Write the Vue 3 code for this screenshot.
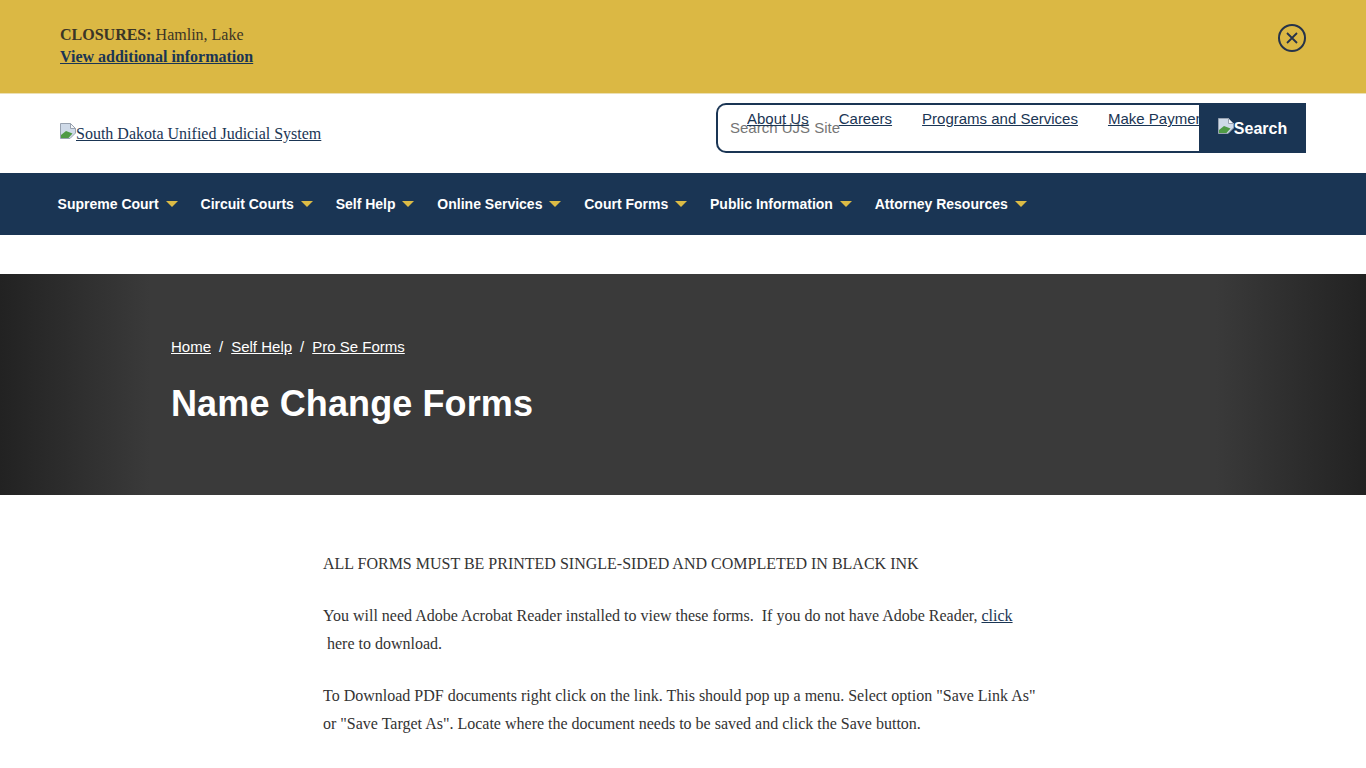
<template>
  <main class="page">
    <section class="alert">
      <div class="alert-text">
        <p><strong>CLOSURES:</strong> Hamlin, Lake</p>
        <a href="#" class="alert-link">View additional information</a>
      </div>
      <button class="alert-close" aria-label="Close">
        <svg width="30" height="30" viewBox="0 0 30 30">
          <circle cx="15" cy="15" r="13" fill="none" stroke="#26334a" stroke-width="2" />
          <path d="M10 10l10 10M20 10l-10 10" fill="none" stroke="#26334a" stroke-width="1.8" />
        </svg>
      </button>
    </section>

    <header class="header">
      <a href="#" class="logo">
        <svg class="broken" width="16" height="16" viewBox="0 0 16 16">
          <path d="M0.5 0.5H10.5L15.5 5.5V10L10 15.5H0.5Z" fill="#cfdae8" stroke="#98a2b0" />
          <path d="M10.5 0.5V5.5H15.5Z" fill="#f4f6f8" stroke="#98a2b0" />
          <path d="M1 15V12L6 8L12.5 10.5L8.5 15Z" fill="#4f9a45" />
        </svg>South Dakota Unified Judicial System
      </a>

      <div class="search-wrap">
        <form class="search" @submit.prevent>
          <input type="text" placeholder="Search UJS Site" />
          <button type="submit">
            <svg class="broken" width="16" height="16" viewBox="0 0 16 16">
              <path d="M0.5 0.5H10.5L15.5 5.5V10L10 15.5H0.5Z" fill="#cfdae8" stroke="#98a2b0" />
              <path d="M10.5 0.5V5.5H15.5Z" fill="#f4f6f8" stroke="#98a2b0" />
              <path d="M1 15V12L6 8L12.5 10.5L8.5 15Z" fill="#4f9a45" />
            </svg>Search
          </button>
        </form>
        <nav class="top-links">
          <a v-for="link in topLinks" :key="link" href="#">{{ link }}</a>
        </nav>
      </div>
    </header>

    <nav class="main-nav">
      <a v-for="item in navItems" :key="item" href="#" class="nav-item">
        {{ item }}<span class="caret"></span>
      </a>
    </nav>

    <section class="hero">
      <div class="crumbs">
        <a href="#">Home</a><span>/</span><a href="#">Self Help</a><span>/</span><a href="#">Pro Se Forms</a>
      </div>
      <h1>Name Change Forms</h1>
    </section>

    <section class="content">
      <p>ALL FORMS MUST BE PRINTED SINGLE-SIDED AND COMPLETED IN BLACK INK</p>
      <p>
        You will need Adobe Acrobat Reader installed to view these forms.&nbsp; If you do not have Adobe Reader,
        <a href="#">click</a><br />&nbsp;here to download.
      </p>
      <p>
        To Download PDF documents right click on the link. This should pop up a menu. Select option "Save Link As"
        or "Save Target As". Locate where the document needs to be saved and click the Save button.
      </p>
    </section>
  </main>
</template>

<script setup>
const topLinks = ["About Us", "Careers", "Programs and Services", "Make Payments"];

const navItems = [
  "Supreme Court",
  "Circuit Courts",
  "Self Help",
  "Online Services",
  "Court Forms",
  "Public Information",
  "Attorney Resources",
];
</script>

<style>
html,
body {
  margin: 0;
  background: #fff;
  overflow: hidden;
}
</style>

<style scoped>
* {
  box-sizing: border-box;
}

.page {
  height: 768px;
  overflow: hidden;
  font-family: "Liberation Serif", serif;
  font-size: 16px;
  color: #333;
}

.alert {
  height: 94px;
  padding: 24px 60px 0;
  background: #dbb844;
  border-bottom: 1px solid #ece0b4;
  display: flex;
  justify-content: space-between;
  align-items: flex-start;
  color: #3b3526;
  line-height: 22px;
}

.alert p {
  margin: 0;
}

.alert-link {
  font-weight: 700;
  color: #1a3554;
}

.alert-close {
  border: none;
  background: none;
  padding: 0;
  width: 30px;
  height: 30px;
  margin: -1px -1px 0 0;
}

.header {
  height: 79px;
  padding: 9px 60px 0;
  display: flex;
  justify-content: space-between;
  align-items: flex-start;
}

.logo {
  margin-top: 20px;
  line-height: 20px;
  color: #1a3554;
}

.broken {
  vertical-align: baseline;
}

.search-wrap {
  position: relative;
  width: 590px;
  height: 50px;
}

.search {
  display: flex;
  height: 50px;
}

.search input {
  flex: 1;
  min-width: 0;
  height: 50px;
  padding: 0 12px 2px;
  border: 2px solid #1a3554;
  border-right: none;
  border-radius: 10px 0 0 10px;
  background: transparent;
  outline: none;
  font-family: "Liberation Sans", sans-serif;
  font-size: 15px;
}

.search input::placeholder {
  color: #757575;
  opacity: 1;
}

.search button {
  position: relative;
  z-index: 2;
  width: 107px;
  border: none;
  background: #1a3554;
  color: #fff;
  font-family: "Liberation Sans", sans-serif;
  font-size: 16px;
  font-weight: 700;
  padding: 0;
}

.top-links {
  position: absolute;
  top: 6px;
  left: 31px;
  width: 452px;
  overflow: hidden;
  white-space: nowrap;
  display: flex;
  gap: 30px;
  font-family: "Liberation Sans", sans-serif;
  font-size: 15px;
  line-height: 20px;
}

.top-links a {
  color: #1a3554;
}

.main-nav {
  height: 62px;
  padding-left: 57.6px;
  background: #1a3554;
  display: flex;
  align-items: center;
  gap: 23px;
}

.nav-item {
  display: flex;
  align-items: center;
  color: #fff;
  font-family: "Liberation Sans", sans-serif;
  font-size: 14px;
  font-weight: 700;
  text-decoration: none;
}

.caret {
  width: 0;
  height: 0;
  margin-left: 6.8px;
  border-top: 6px solid #dcbb45;
  border-left: 6px solid transparent;
  border-right: 6px solid transparent;
}

.hero {
  height: 221px;
  margin-top: 39px;
  padding: 63px 171px 0;
  color: #fff;
  font-family: "Liberation Sans", sans-serif;
  background: linear-gradient(90deg, #222 0, #3a3a3a 150px, #3a3a3a 1216px, #222 100%);
}

.crumbs {
  display: flex;
  gap: 8px;
  font-size: 15px;
  line-height: 20px;
}

.crumbs a {
  color: #fff;
}

h1 {
  margin: 25px 0 0;
  font-size: 36px;
  line-height: 44px;
  font-weight: 700;
  letter-spacing: 0.12px;
}

.content {
  width: 720px;
  margin-left: 323px;
  padding-top: 55px;
  line-height: 28px;
}

.content p {
  margin: 0 0 24px;
}

.content a {
  color: #1a3554;
}
</style>
